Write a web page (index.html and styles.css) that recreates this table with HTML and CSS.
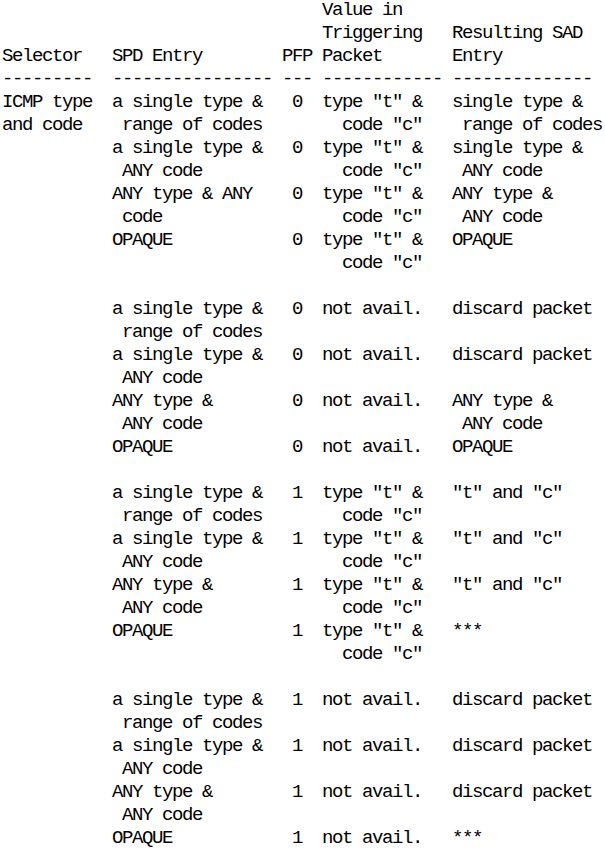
FILE: index.html
```html
<!DOCTYPE html>
<html>
<head>
<meta charset="utf-8">
<link rel="stylesheet" href="styles.css">
</head>
<body>
<pre class="rfc-table">                                Value in
                                Triggering   Resulting SAD
Selector   SPD Entry        PFP Packet       Entry
---------  ---------------- --- ------------ --------------
ICMP type  a single type &amp;   0  type "t" &amp;   single type &amp;
and code    range of codes        code "c"    range of codes
           a single type &amp;   0  type "t" &amp;   single type &amp;
            ANY code              code "c"    ANY code
           ANY type &amp; ANY    0  type "t" &amp;   ANY type &amp;
            code                  code "c"    ANY code
           OPAQUE            0  type "t" &amp;   OPAQUE
                                  code "c"

           a single type &amp;   0  not avail.   discard packet
            range of codes
           a single type &amp;   0  not avail.   discard packet
            ANY code
           ANY type &amp;        0  not avail.   ANY type &amp;
            ANY code                          ANY code
           OPAQUE            0  not avail.   OPAQUE

           a single type &amp;   1  type "t" &amp;   "t" and "c"
            range of codes        code "c"
           a single type &amp;   1  type "t" &amp;   "t" and "c"
            ANY code              code "c"
           ANY type &amp;        1  type "t" &amp;   "t" and "c"
            ANY code              code "c"
           OPAQUE            1  type "t" &amp;   ***
                                  code "c"

           a single type &amp;   1  not avail.   discard packet
            range of codes
           a single type &amp;   1  not avail.   discard packet
            ANY code
           ANY type &amp;        1  not avail.   discard packet
            ANY code
           OPAQUE            1  not avail.   ***</pre>
</body>
</html>
```

FILE: styles.css
```css
html, body {
  margin: 0;
  padding: 0;
  background: #ffffff;
}

.rfc-table {
  margin: -1px 0 0 0;
  padding: 0 0 0 2px;
  font-family: "Liberation Mono", "DejaVu Sans Mono", monospace;
  font-size: 19px;
  letter-spacing: -1.4px;
  line-height: 23px;
  color: #000000;
  white-space: pre;
}
```
